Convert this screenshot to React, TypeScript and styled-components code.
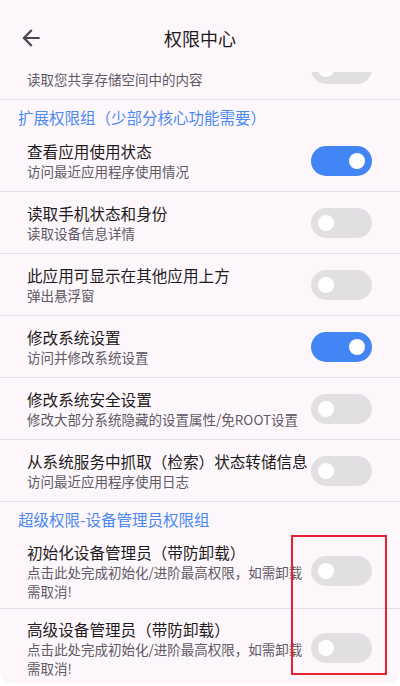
import React, { useState } from 'react';
import styled, { createGlobalStyle } from 'styled-components';

const GlobalStyle = createGlobalStyle`
  html, body {
    margin: 0;
    padding: 0;
    background: #ffffff;
  }
  body {
    font-family: "Noto Sans CJK SC", "Noto Sans", sans-serif;
  }
`;

const Screen = styled.div`
  position: relative;
  width: 400px;
  height: 683px;
  background: #fdf7fc;
  border-radius: 0 0 10px 10px;
  overflow: hidden;
  display: flex;
  flex-direction: column;
`;

const Header = styled.header`
  height: 72px;
  flex-shrink: 0;
  box-sizing: border-box;
  padding-top: 4px;
  display: grid;
  grid-template-columns: 56px 1fr 56px;
  align-items: center;
`;

const BackButton = styled.button`
  margin-left: 18px;
  width: 26px;
  height: 26px;
  padding: 0;
  border: none;
  background: none;
  display: flex;
  cursor: pointer;
`;

const Title = styled.h1`
  margin: 0;
  text-align: center;
  font-size: 18px;
  font-weight: 400;
  color: #1d1b20;
`;

const Viewport = styled.div`
  flex: 1;
  overflow: hidden;
`;

// scrolled down a little, first row sits under the header
const List = styled.div`
  margin-top: -34px;
`;

const SectionTitle = styled.div`
  padding: 7px 18px 3px;
  font-size: 15.5px;
  line-height: 20px;
  color: #4a89f0;
`;

const Row = styled.div<{ $multi?: boolean }>`
  display: flex;
  align-items: center;
  gap: 3px;
  padding: ${(p) => (p.$multi ? '9px 28px 7px 27px' : '10px 28px 10px 27px')};
  border-bottom: 1px solid #e4dde4;
  cursor: pointer;
`;

const Texts = styled.div`
  flex: 1;
  min-width: 0;
`;

const RowTitle = styled.div`
  font-size: 15.6px;
  line-height: 22px;
  color: #1d1b20;
  white-space: nowrap;
`;

const RowSub = styled.div`
  font-size: 13.5px;
  line-height: 19px;
  color: #605a64;
`;

const Track = styled.div<{ $on: boolean }>`
  position: relative;
  flex-shrink: 0;
  width: 61px;
  height: 30px;
  border-radius: 15px;
  background: ${(p) => (p.$on ? '#4285f4' : '#e2dfe3')};
  transition: background 0.15s;
`;

const Knob = styled.div<{ $on: boolean }>`
  position: absolute;
  top: 7px;
  left: ${(p) => (p.$on ? '38px' : '7px')};
  width: 16px;
  height: 16px;
  border-radius: 50%;
  background: #ffffff;
  transition: left 0.15s;
`;

const Marker = styled.div`
  position: absolute;
  left: 291px;
  top: 535px;
  width: 96px;
  height: 140px;
  box-sizing: border-box;
  border: 2px solid #e8202f;
  pointer-events: none;
`;

type Item = { key: string; title: string; sub: string; on: boolean };

const storage: Item = {
  key: 'storage',
  title: '读取共享存储空间',
  sub: '读取您共享存储空间中的内容',
  on: false,
};

const extended: Item[] = [
  { key: 'usage', title: '查看应用使用状态', sub: '访问最近应用程序使用情况', on: true },
  { key: 'phone', title: '读取手机状态和身份', sub: '读取设备信息详情', on: false },
  { key: 'overlay', title: '此应用可显示在其他应用上方', sub: '弹出悬浮窗', on: false },
  { key: 'settings', title: '修改系统设置', sub: '访问并修改系统设置', on: true },
  { key: 'secure', title: '修改系统安全设置', sub: '修改大部分系统隐藏的设置属性/免ROOT设置', on: false },
  { key: 'dump', title: '从系统服务中抓取（检索）状态转储信息', sub: '访问最近应用程序使用日志', on: false },
];

const admin: Item[] = [
  { key: 'admin', title: '初始化设备管理员（带防卸载）', sub: '点击此处完成初始化/进阶最高权限，如需卸载需取消!', on: false },
  { key: 'owner', title: '高级设备管理员（带防卸载）', sub: '点击此处完成初始化/进阶最高权限，如需卸载需取消!', on: false },
];

const Toggle = ({ on }: { on: boolean }) => (
  <Track $on={on}>
    <Knob $on={on} />
  </Track>
);

const PermissionRow = ({
  item,
  on,
  onToggle,
  multi,
}: {
  item: Item;
  on: boolean;
  onToggle: () => void;
  multi?: boolean;
}) => (
  <Row $multi={multi} onClick={onToggle}>
    <Texts>
      <RowTitle>{item.title}</RowTitle>
      <RowSub>{item.sub}</RowSub>
    </Texts>
    <Toggle on={on} />
  </Row>
);

const App = () => {
  const all = [storage, ...extended, ...admin];
  const [state, setState] = useState<Record<string, boolean>>(
    Object.fromEntries(all.map((i) => [i.key, i.on]))
  );
  const flip = (key: string) => setState((s) => ({ ...s, [key]: !s[key] }));

  return (
    <>
      <GlobalStyle />
      <Screen>
        <Header>
          <BackButton aria-label="返回">
            <svg width="26" height="26" viewBox="0 0 24 24">
              <path
                d="M20 11H7.83l5.59-5.59L12 4l-8 8 8 8 1.41-1.41L7.83 13H20v-2z"
                fill="#49454f"
              />
            </svg>
          </BackButton>
          <Title>权限中心</Title>
          <span />
        </Header>
        <Viewport>
          <List>
            <PermissionRow item={storage} on={state[storage.key]} onToggle={() => flip(storage.key)} />
            <SectionTitle>扩展权限组（少部分核心功能需要）</SectionTitle>
            {extended.map((item) => (
              <PermissionRow key={item.key} item={item} on={state[item.key]} onToggle={() => flip(item.key)} />
            ))}
            <SectionTitle>超级权限-设备管理员权限组</SectionTitle>
            {admin.map((item) => (
              <PermissionRow key={item.key} item={item} multi on={state[item.key]} onToggle={() => flip(item.key)} />
            ))}
          </List>
        </Viewport>
        <Marker />
      </Screen>
    </>
  );
};

export default App;
